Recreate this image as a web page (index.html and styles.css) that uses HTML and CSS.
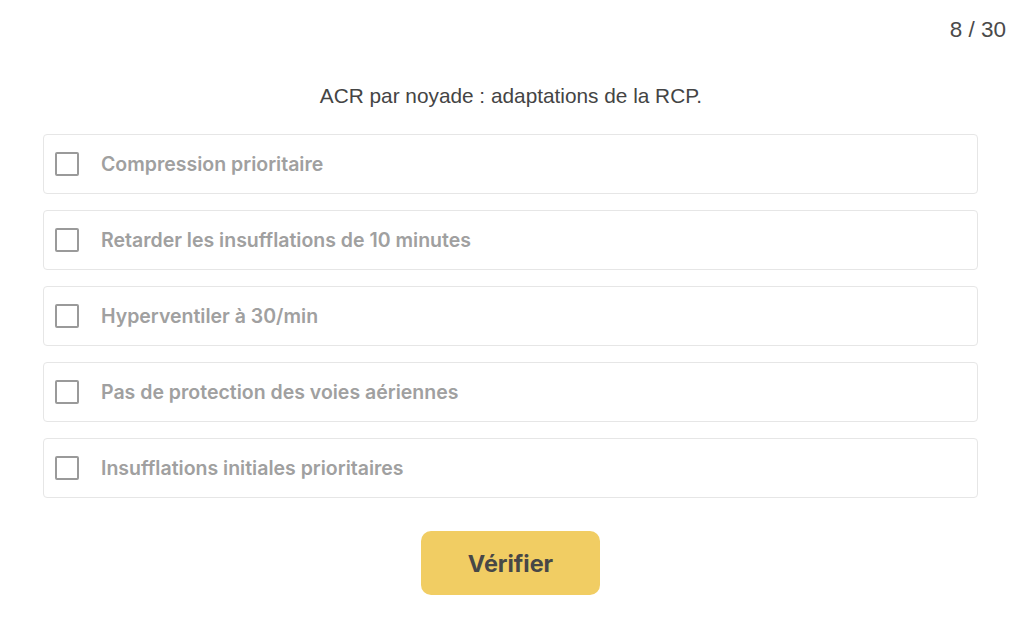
FILE: index.html
```html
<!DOCTYPE html>
<html lang="fr">
<head>
<meta charset="utf-8">
<link rel="stylesheet" href="styles.css">
</head>
<body>
<div class="page">
  <div class="counter">8 / 30</div>
  <h1 class="question">ACR par noyade : adaptations de la RCP.</h1>
  <div class="options">
    <label class="option"><span class="box"></span><span class="label">Compression prioritaire</span></label>
    <label class="option"><span class="box"></span><span class="label">Retarder les insufflations de 10 minutes</span></label>
    <label class="option"><span class="box"></span><span class="label">Hyperventiler à 30/min</span></label>
    <label class="option"><span class="box"></span><span class="label">Pas de protection des voies aériennes</span></label>
    <label class="option"><span class="box"></span><span class="label">Insufflations initiales prioritaires</span></label>
  </div>
  <div class="actions">
    <button class="verify">Vérifier</button>
  </div>
</div>
</body>
</html>
```
FILE: styles.css
```css
html, body {
  margin: 0;
  padding: 0;
  background: #ffffff;
}
.page {
  width: 1024px;
  height: 632px;
  box-sizing: border-box;
  padding: 18px 0 0 0;
  display: flex;
  flex-direction: column;
  font-family: "Liberation Sans", Arial, sans-serif;
}
.counter {
  align-self: flex-end;
  margin-right: 18px;
  font-size: 22.5px;
  line-height: 24px;
  color: #4a4a4a;
}
.question {
  margin: 42px 0 0 0;
  padding-right: 2px;
  text-align: center;
  font-size: 20.8px;
  line-height: 24px;
  font-weight: normal;
  color: #444444;
}
.options {
  margin: 26px 46px 0 43px;
  display: flex;
  flex-direction: column;
  gap: 16px;
}
.option {
  height: 60px;
  box-sizing: border-box;
  border: 1px solid #e6e6e6;
  border-radius: 4px;
  display: flex;
  align-items: center;
  padding-left: 11px;
  gap: 22px;
}
.box {
  width: 24px;
  height: 24px;
  box-sizing: border-box;
  border: 2px solid #9a9a9a;
  border-radius: 2px;
  flex: none;
}
.label {
  font-family: Inter, "Liberation Sans", sans-serif;
  font-size: 19.5px;
  font-weight: 600;
  color: #a0a0a0;
}
.actions {
  display: flex;
  justify-content: center;
  margin-top: 33px;
  padding-right: 3px;
}
.verify {
  width: 179px;
  height: 64px;
  border: none;
  border-radius: 10px;
  background: #f1cd63;
  color: #474747;
  font-family: Inter, "Liberation Sans", sans-serif;
  font-size: 23.4px;
  font-weight: 700;
  cursor: pointer;
}
```
